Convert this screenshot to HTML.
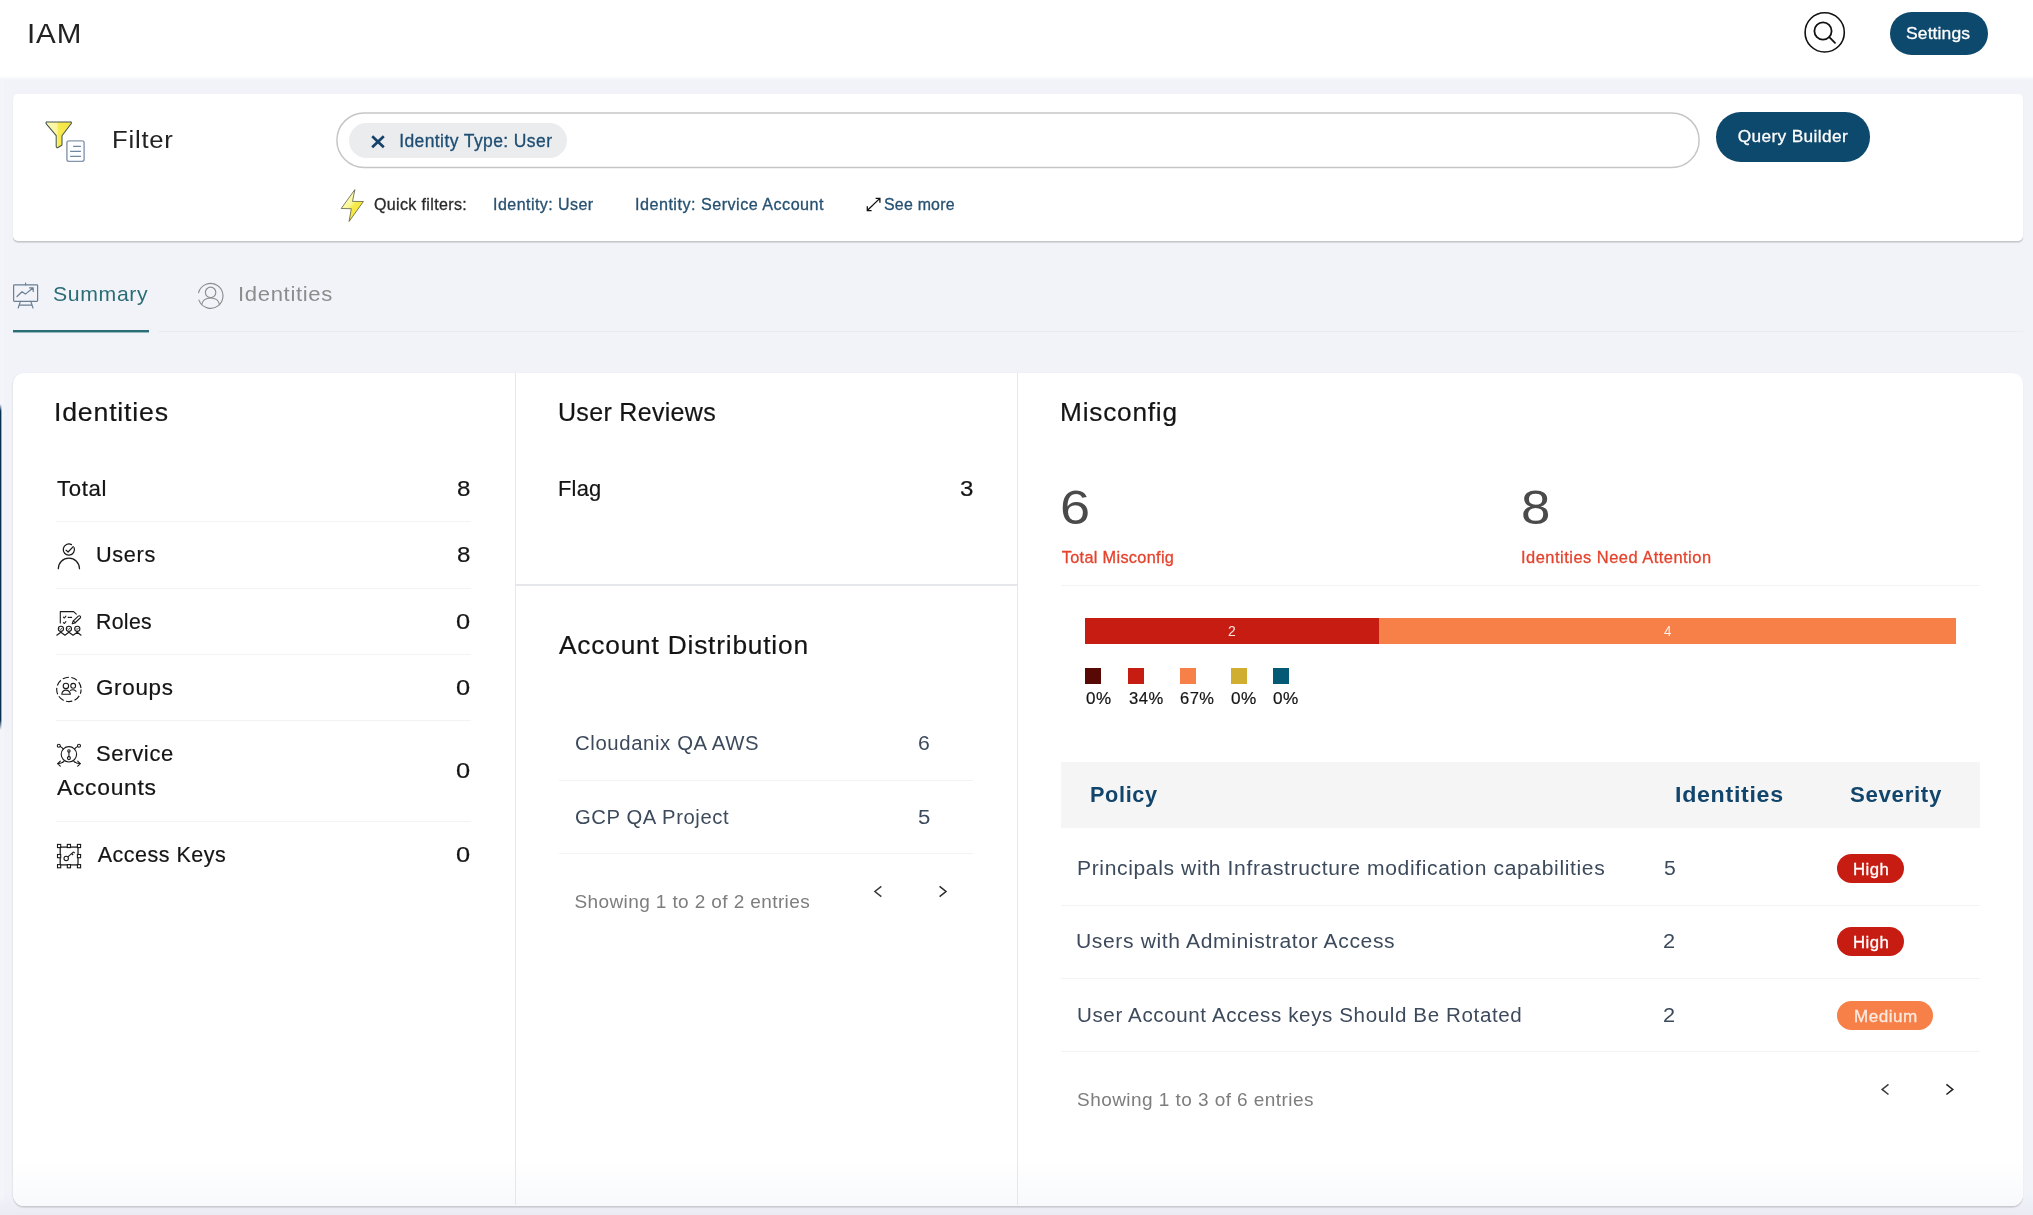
<!DOCTYPE html>
<html lang="en"><head><meta charset="utf-8"><title>IAM</title>
<style>
html,body{margin:0;padding:0;}
body{width:2033px;height:1215px;overflow:hidden;background:#f1f3f9;font-family:"Liberation Sans",sans-serif;}
#root{will-change:transform;position:relative;width:2033px;height:1215px;overflow:hidden;}
.t{position:absolute;transform-origin:0 0;white-space:nowrap;line-height:1;}
.a{position:absolute;}
.sep{height:1px;background:#f2f3f5;}
.b{-webkit-text-stroke:0.3px currentColor;}
.b2{-webkit-text-stroke:0.2px currentColor;}

</style></head>
<body>
<div id="root">
<header class="topbar">
<!-- header -->
<div class="a" style="left:0;top:0;width:2033px;height:80px;background:linear-gradient(to bottom,#fff 0,#fff 76px,#f1f3f9 80px);"></div>
<div class="a" style="left:0;top:80px;width:4px;height:1135px;background:#f4f5fa;"></div>
<div class="a" style="left:0;top:404px;width:1px;height:326px;background:linear-gradient(to bottom,rgba(5,48,78,0) 0,#05304e 7px,#05304e 316px,rgba(5,48,78,0) 100%);"></div><div class="a" style="left:1px;top:404px;width:1px;height:326px;background:linear-gradient(to bottom,rgba(5,48,78,0) 0,rgba(5,48,78,.38) 7px,rgba(5,48,78,.38) 316px,rgba(5,48,78,0) 100%);"></div>
<svg class="a" style="left:1800px;top:8px;" width="50" height="50" viewBox="0 0 50 50" fill="none" stroke="#111" stroke-width="1.6" stroke-linecap="round">
<circle cx="24.7" cy="24.4" r="19.6"/><circle cx="23" cy="23" r="8.6" stroke-width="1.8"/><path d="M29.3 29.2 35 34.8" stroke-width="1.8"/></svg>
<div class="a" style="left:1890px;top:12px;width:98px;height:43px;border-radius:21.5px;background:#0d486d;"></div>
<span class="t" style="left:27.10px;top:19px;font-size:28.2px;color:#222;letter-spacing:0.846px;transform:scaleX(1.0489);">IAM</span>
<span class="t b" style="left:1906.30px;top:25px;font-size:17.3px;color:#fff;letter-spacing:0.114px;transform:scaleX(1.0129);">Settings</span>
</header>
<section class="filter">
<!-- filter card -->
<div class="a" style="left:13px;top:94px;width:2010px;height:147px;background:#fff;border-radius:5px;box-shadow:0 1px 0 #c6c6ca,0 2px 1px rgba(120,120,130,.22);"></div>
<svg class="a" style="left:40px;top:115px;" width="52" height="52" viewBox="40 115 52 52">
<defs><linearGradient id="fg" x1="0" y1="0" x2="1" y2="0"><stop offset="0" stop-color="#fdf9b4"/><stop offset=".42" stop-color="#fbf59e"/><stop offset=".5" stop-color="#f7e94f"/><stop offset="1" stop-color="#f4e445"/></linearGradient></defs>
<path d="M47.1 121.9H70.3a1.1 1.1 0 0 1 .8 1.9L62 135.7v8.8c0 .4-.2.8-.6 1l-3.5 2a1.1 1.1 0 0 1-1.7-.9V135.7L46.3 123.8a1.1 1.1 0 0 1 .8-1.9z" fill="url(#fg)" stroke="#43544e" stroke-width="1.05" stroke-linejoin="round"/>
<rect x="66.9" y="140.9" width="17.2" height="20.5" rx="2.1" fill="#fdfeff" stroke="#8597ac" stroke-width="1.4"/>
<path d="M73.1 146.4H80.9M70.1 151.4H80.9M70.1 156.4H80.9" stroke="#6f879f" stroke-width="1.25" fill="none"/>
</svg>
<svg class="a" style="left:334px;top:110px;" width="1368" height="60"><rect x="2.9" y="2.9" width="1362.2" height="54.6" rx="27.3" fill="#fff" stroke="#c6c6c6" stroke-width="1.5"/></svg>
<div class="a" style="left:349px;top:123px;width:218px;height:35px;border-radius:17.5px;background:#ebecee;"></div>
<svg class="a" style="left:369px;top:133px;" width="18" height="18" viewBox="0 0 18 18"><path d="M3.2 3.2 14.8 14.2M14.8 3.2 3.2 14.2" stroke="#14426a" stroke-width="2.7" stroke-linecap="butt" fill="none"/></svg>
<div class="a" style="left:1716px;top:112px;width:154px;height:49.5px;border-radius:24.75px;background:#0d486d;"></div>
<!-- lightning -->
<svg class="a" style="left:336px;top:184px;" width="34" height="44" viewBox="336 184 34 44"><defs><linearGradient id="lg" x1="0.2" y1="0.1" x2="0.8" y2="0.8"><stop offset="0" stop-color="#fdfdd2"/><stop offset=".45" stop-color="#fbf793"/><stop offset=".6" stop-color="#f8ea48"/><stop offset="1" stop-color="#f5e438"/></linearGradient></defs><path d="M354.9 189.6 341.2 208.5 351.3 208.7 349.1 221.5 363.4 201.5 352.5 201.4z" fill="url(#lg)" stroke="#5a5e44" stroke-width=".8" stroke-linejoin="miter" stroke-miterlimit="6"/></svg>
<!-- expand icon -->
<svg class="a" style="left:864px;top:195px;" width="20" height="20" viewBox="0 0 20 20" fill="none" stroke="#111" stroke-width="1.3"><path d="M3.5 15.3 15.6 3.6M11.6 3.4h4.3v4.3M3.3 11.3v4.3h4.3"/></svg>
<span class="t" style="left:111.70px;top:128px;font-size:24.2px;color:#222;letter-spacing:0.726px;transform:scaleX(1.0618);">Filter</span>
<span class="t b" style="left:399.20px;top:133px;font-size:17.5px;color:#1d4d72;letter-spacing:0.400px;">Identity Type: User</span>
<span class="t b" style="left:1737.70px;top:128px;font-size:17.3px;color:#fff;letter-spacing:0.358px;">Query Builder</span>
<span class="t b" style="left:373.90px;top:197px;font-size:16px;color:#2a2a2a;letter-spacing:0.377px;">Quick filters:</span>
<span class="t b" style="left:493.10px;top:197px;font-size:16px;color:#265170;letter-spacing:0.446px;">Identity: User</span>
<span class="t b" style="left:634.50px;top:197px;font-size:16px;color:#265170;letter-spacing:0.480px;transform:scaleX(1.0097);">Identity: Service Account</span>
<span class="t b" style="left:884.20px;top:197px;font-size:16px;color:#265170;letter-spacing:0.229px;transform:scaleX(0.9943);">See more</span>
</section>
<nav class="tabs">
<!-- tabs -->
<div class="a" style="left:158px;top:330.5px;width:1865px;height:1px;background:#e9ebf1;"></div>
<div class="a" style="left:13px;top:330px;width:136px;height:2px;background:#2a6d74;"></div><div class="a" style="left:13px;top:332px;width:136px;height:1px;background:rgba(42,109,116,.45);"></div>
<svg class="a" style="left:11px;top:281px;" width="30" height="30" viewBox="0 0 30 30" fill="none" stroke="#6a7f93" stroke-width="1.2" stroke-linejoin="round" stroke-linecap="round">
<rect x="2.6" y="3.8" width="24" height="16.6" rx=".8"/><path d="M14.6 2.2v1.6M6 15.5l5-4.8 3.4 2.4 7.8-6.3M18.6 6.8h3.6v3.6M9.4 20.4 7.2 27M19.8 20.4 22 27M8.2 24.2h12.8"/></svg>
<svg class="a" style="left:195px;top:280px;" width="32" height="32" viewBox="195 280 32 32" fill="none" stroke="#8d8d8d" stroke-width="1.15" stroke-linecap="round">
<path d="M198.62 292.69A12.4 12.4 0 1 1 198.95 300.14"/><circle cx="210.6" cy="292.4" r="5.2"/><path d="M201.6 304.6c.9-4.2 4.2-6.6 9-6.6s8.1 2.4 9 6.6"/>
</svg>
<span class="t" style="left:53.30px;top:284px;font-size:20.8px;color:#2a6d74;letter-spacing:0.624px;transform:scaleX(1.0209);">Summary</span>
<span class="t" style="left:238.00px;top:284px;font-size:20.8px;color:#8c8c8c;letter-spacing:0.624px;transform:scaleX(1.0616);">Identities</span>
</nav>
<main class="summary">
<!-- main card -->
<div class="a" style="left:0;top:1195px;width:2033px;height:20px;background:linear-gradient(to bottom,rgba(233,235,242,0),rgba(233,235,242,.9));"></div>
<div class="a" style="left:13px;top:373px;width:2010px;height:832.5px;background:#fff;border-radius:11px;box-shadow:0 1px 0 #cacace,0 2px 1px rgba(120,120,130,.2),-1px 0 1px rgba(120,120,130,.08);"></div>
<div class="a" style="left:13px;top:1160px;width:2010px;height:45.5px;border-radius:0 0 11px 11px;background:linear-gradient(to bottom,rgba(248,248,251,0),rgba(247,248,251,.85));"></div>
<div class="a" style="left:514.5px;top:373px;width:1px;height:832px;background:#e6e7ea;"></div>
<div class="a" style="left:1016.5px;top:373px;width:1px;height:832px;background:#e6e7ea;"></div>
<div class="a" style="left:515px;top:584px;width:502px;height:1.5px;background:#e6e7ea;"></div>

<!-- identity separators -->
<div class="a sep" style="left:56px;top:521px;width:415px;"></div>
<div class="a sep" style="left:56px;top:588px;width:415px;"></div>
<div class="a sep" style="left:56px;top:654px;width:415px;"></div>
<div class="a sep" style="left:56px;top:720px;width:415px;"></div>
<div class="a sep" style="left:56px;top:821px;width:415px;"></div>
<!-- account distribution separators -->
<div class="a sep" style="left:559px;top:780px;width:414px;"></div>
<div class="a sep" style="left:559px;top:853px;width:414px;"></div>
<!-- misconfig -->
<div class="a sep" style="left:1061px;top:585px;width:919px;"></div>
<div class="a" style="left:1085px;top:618px;width:293.5px;height:26px;background:#c71c12;"></div>
<div class="a" style="left:1378.5px;top:618px;width:577.5px;height:26px;background:#f77f48;"></div>
<div class="a" style="left:1085px;top:668px;width:16px;height:16px;background:#580905;"></div>
<div class="a" style="left:1128px;top:668px;width:16px;height:16px;background:#c71c12;"></div>
<div class="a" style="left:1180px;top:668px;width:16px;height:16px;background:#f77f48;"></div>
<div class="a" style="left:1231px;top:668px;width:16px;height:16px;background:#cfae30;"></div>
<div class="a" style="left:1273px;top:668px;width:16px;height:16px;background:#045a74;"></div>
<div class="a" style="left:1061px;top:762px;width:919px;height:66px;background:#f5f5f5;"></div>
<div class="a sep" style="left:1061px;top:905px;width:919px;"></div>
<div class="a sep" style="left:1061px;top:978px;width:919px;"></div>
<div class="a sep" style="left:1061px;top:1051px;width:919px;"></div>
<div class="a" style="left:1837px;top:854px;width:67px;height:29px;border-radius:14.5px;background:#c71c12;"></div>
<div class="a" style="left:1837px;top:927px;width:67px;height:29px;border-radius:14.5px;background:#c71c12;"></div>
<div class="a" style="left:1837px;top:1001px;width:96px;height:29px;border-radius:14.5px;background:#f77f48;"></div>
<!-- pager arrows -->
<svg class="a" style="left:868px;top:881px;" width="20" height="20" viewBox="868 881 20 20" fill="none" stroke="#3a3a3a" stroke-width="1.5" stroke-linejoin="miter"><path d="M881.3 886.4L874.9 891.5L881.3 896.6"/></svg>
<svg class="a" style="left:932px;top:881px;" width="20" height="20" viewBox="932 881 20 20" fill="none" stroke="#2a2a2a" stroke-width="1.5" stroke-linejoin="miter"><path d="M939.6 886.4L946.0 891.5L939.6 896.6"/></svg>
<svg class="a" style="left:1875px;top:1079px;" width="20" height="20" viewBox="1875 1079 20 20" fill="none" stroke="#3a3a3a" stroke-width="1.5" stroke-linejoin="miter"><path d="M1888.5 1084.3L1882.1 1089.4L1888.5 1094.5"/></svg>
<svg class="a" style="left:1939px;top:1079px;" width="20" height="20" viewBox="1939 1079 20 20" fill="none" stroke="#222" stroke-width="1.5" stroke-linejoin="miter"><path d="M1946.4 1084.3L1952.8 1089.4L1946.4 1094.5"/></svg>
<!-- identity icons (page coordinates) -->
<svg class="a" style="left:50px;top:540px;" width="40" height="340" viewBox="50 540 40 340" fill="none" stroke="#1a1a1a" stroke-width="1.25" stroke-linecap="round" stroke-linejoin="round">
<!-- users -->
<path d="M74.11 547.63A5.6 5.6 0 1 1 71.48 544.61"/>
<path d="M66 550.1l2.1 1.9 5.1-5.4"/>
<path d="M58.3 568.7a10.6 10.6 0 0 1 21.2 0"/>
<!-- roles -->
<g stroke-width="1.1">
<path d="M60.3 623V611.6H73.6l2.7 2.6"/>
<path d="M63.4 617.1l1 .9 1.5-1.8M63.4 622.6l1 .9 1.5-1.8M68.2 617.4h1.2M70.4 617.4h1.2"/>
<path d="M72.2 623.8l.9-2.7 5.2-5a1.3 1.3 0 0 1 1.9 1.9l-5.3 5z"/>
<path d="M73.3 620.9l1.8 1.8"/>
<circle cx="60.9" cy="628.8" r="2.6"/><circle cx="68.9" cy="628.8" r="2.6"/><circle cx="77.3" cy="628.8" r="2.6"/>
<path d="M59.9 628.7l.8.8 1.3-1.4M67.9 628.7l.8.8 1.3-1.4M76.3 628.7l.8.8 1.3-1.4" stroke-width=".8"/>
<path d="M56.8 635.2l4.1-3 4 3 4-3 4.2 3 4.2-3 3.7 3"/>
</g>
<!-- groups -->
<circle cx="68.9" cy="689.4" r="12.2" stroke-width="1.15" stroke-dasharray="6.4 2.4" stroke-dashoffset="2" stroke-linecap="butt"/>
<g stroke-width="1.1">
<circle cx="65.9" cy="685.9" r="2.7"/>
<circle cx="73.2" cy="685.8" r="2.4"/>
<path d="M61.8 694.2c.4-3 2-4.1 4.1-4.1s3.9 1.1 4.5 4.1z"/>
<path d="M70.4 690.4c1.2-.9 4.2-1.2 5.6.9"/>
</g>
<!-- service accounts -->
<g stroke-width="1.1">
<circle cx="68.9" cy="754.3" r="7.7"/>
<circle cx="68.9" cy="750.9" r="1.2"/><circle cx="68.9" cy="758.1" r="1.5"/><path d="M68.9 752.1v4.5"/>
<circle cx="58.8" cy="745.7" r="1.5"/><circle cx="79" cy="745.7" r="1.5"/>
<path d="M60.2 746.5c1.5.5 2.5 1.6 3.1 2.8M77.6 746.5c-1.5.5-2.5 1.6-3.1 2.8"/>
<path d="M63.9 761.5c-1.5 1.4-3.5 2.1-6.2 2.2M60.3 761.2l-2.7 2.5 2.7 2.5M73.9 761.5c1.5 1.4 3.5 2.1 6.2 2.2M77.7 761.2l2.7 2.5-2.7 2.5"/>
</g>
<!-- access keys -->
<g stroke-width="1.25" stroke-linejoin="miter">
<rect x="60.2" y="847.1" width="17.8" height="17.8"/>
<g fill="#fff" stroke-width="1.1">
<rect x="57.5" y="844.4" width="3.2" height="3.2"/><rect x="67.3" y="844.4" width="3.2" height="3.2"/><rect x="77.4" y="844.4" width="3.2" height="3.2"/>
<rect x="57.5" y="854.5" width="3.2" height="3.2"/><rect x="77.4" y="854.5" width="3.2" height="3.2"/>
<rect x="57.5" y="864.6" width="3.2" height="3.2"/><rect x="67.3" y="864.6" width="3.2" height="3.2"/><rect x="77.4" y="864.6" width="3.2" height="3.2"/>
</g>
<circle cx="66.2" cy="858.4" r="2.2" stroke-width="1.1"/>
<path d="M67.9 856.9l5.6-5M71.7 853.5l1.4 1.5M73.5 851.9l1.2 1.3" stroke-width="1.1" stroke-linecap="butt"/>
</g>
</svg>
<span class="t b2" style="left:54.40px;top:400px;font-size:25px;color:#141414;letter-spacing:0.750px;transform:scaleX(1.0673);">Identities</span>
<span class="t b2" style="left:56.90px;top:479px;font-size:21.5px;color:#141414;letter-spacing:0.645px;transform:scaleX(1.0319);">Total</span>
<span class="t b2" style="left:95.90px;top:545px;font-size:21.5px;color:#141414;letter-spacing:0.645px;transform:scaleX(1.0088);">Users</span>
<span class="t b2" style="left:95.70px;top:612px;font-size:21.5px;color:#141414;letter-spacing:0.350px;transform:scaleX(0.9889);">Roles</span>
<span class="t b2" style="left:96.40px;top:678px;font-size:21.5px;color:#141414;letter-spacing:0.645px;transform:scaleX(1.0431);">Groups</span>
<span class="t b2" style="left:96.00px;top:744px;font-size:21.5px;color:#141414;letter-spacing:0.645px;transform:scaleX(1.0230);">Service</span>
<span class="t b2" style="left:57.30px;top:778px;font-size:21.5px;color:#141414;letter-spacing:0.645px;transform:scaleX(1.0652);">Accounts</span>
<span class="t b2" style="left:97.70px;top:845px;font-size:21.5px;color:#141414;letter-spacing:0.500px;">Access Keys</span>
<span class="t b2" style="left:457.10px;top:479px;font-size:21.5px;color:#141414;transform:scaleX(1.1200);">8</span>
<span class="t b2" style="left:457.10px;top:545px;font-size:21.5px;color:#141414;transform:scaleX(1.1200);">8</span>
<span class="t b2" style="left:455.80px;top:612px;font-size:21.5px;color:#141414;transform:scaleX(1.1818);">0</span>
<span class="t b2" style="left:455.80px;top:678px;font-size:21.5px;color:#141414;transform:scaleX(1.1818);">0</span>
<span class="t b2" style="left:455.80px;top:761px;font-size:21.5px;color:#141414;transform:scaleX(1.1818);">0</span>
<span class="t b2" style="left:455.80px;top:845px;font-size:21.5px;color:#141414;transform:scaleX(1.1818);">0</span>
<span class="t b2" style="left:558.00px;top:400px;font-size:25px;color:#141414;letter-spacing:0.318px;">User Reviews</span>
<span class="t b2" style="left:557.70px;top:479px;font-size:21.5px;color:#141414;letter-spacing:0.233px;transform:scaleX(1.0179);">Flag</span>
<span class="t b2" style="left:959.50px;top:479px;font-size:21.5px;color:#141414;transform:scaleX(1.1200);">3</span>
<span class="t b2" style="left:559.40px;top:633px;font-size:25px;color:#141414;letter-spacing:0.750px;transform:scaleX(1.0528);">Account Distribution</span>
<span class="t" style="left:574.70px;top:733px;font-size:20px;color:#3c4a5c;letter-spacing:0.600px;transform:scaleX(1.0162);">Cloudanix QA AWS</span>
<span class="t" style="left:917.50px;top:733px;font-size:20px;color:#3c4a5c;transform:scaleX(1.0600);">6</span>
<span class="t" style="left:574.50px;top:807px;font-size:20px;color:#3c4a5c;letter-spacing:0.600px;transform:scaleX(1.0113);">GCP QA Project</span>
<span class="t" style="left:918.10px;top:807px;font-size:20px;color:#3c4a5c;transform:scaleX(1.1111);">5</span>
<span class="t" style="left:574.50px;top:892px;font-size:19px;color:#7d7d7d;letter-spacing:0.392px;">Showing 1 to 2 of 2 entries</span>
<span class="t b2" style="left:1059.90px;top:400px;font-size:25px;color:#141414;letter-spacing:0.750px;transform:scaleX(1.0491);">Misconfig</span>
<span class="t" style="left:1060.10px;top:483px;font-size:49px;color:#4a4a4a;transform:scaleX(1.1043);">6</span>
<span class="t" style="left:1520.50px;top:483px;font-size:49px;color:#4a4a4a;transform:scaleX(1.0783);">8</span>
<span class="t b" style="left:1061.80px;top:549px;font-size:16.3px;color:#e4432d;letter-spacing:0.314px;">Total Misconfig</span>
<span class="t b" style="left:1520.70px;top:549px;font-size:16.3px;color:#e4432d;letter-spacing:0.489px;transform:scaleX(1.0096);">Identities Need Attention</span>
<span class="t" style="left:1228.40px;top:624px;font-size:14.2px;color:#fbe3e0;transform:scaleX(0.9857);">2</span>
<span class="t" style="left:1663.50px;top:624px;font-size:14.2px;color:#fdeee6;transform:scaleX(0.9500);">4</span>
<span class="t b2" style="left:1086.30px;top:690px;font-size:16.5px;color:#141414;letter-spacing:0.495px;transform:scaleX(1.0333);">0%</span>
<span class="t b2" style="left:1128.60px;top:690px;font-size:16.5px;color:#141414;letter-spacing:0.495px;transform:scaleX(1.0059);">34%</span>
<span class="t b2" style="left:1180.00px;top:690px;font-size:16.5px;color:#141414;letter-spacing:0.450px;">67%</span>
<span class="t b2" style="left:1231.30px;top:690px;font-size:16.5px;color:#141414;letter-spacing:0.495px;transform:scaleX(1.0417);">0%</span>
<span class="t b2" style="left:1273.40px;top:690px;font-size:16.5px;color:#141414;letter-spacing:0.495px;transform:scaleX(1.0417);">0%</span>
<span class="t" style="left:1089.50px;top:784px;font-size:21.2px;color:#12456b;font-weight:700;letter-spacing:0.636px;transform:scaleX(1.0234);">Policy</span>
<span class="t" style="left:1674.90px;top:784px;font-size:21.2px;color:#12456b;font-weight:700;letter-spacing:0.636px;transform:scaleX(1.0948);">Identities</span>
<span class="t" style="left:1849.90px;top:784px;font-size:21.2px;color:#12456b;font-weight:700;letter-spacing:0.636px;transform:scaleX(1.0500);">Severity</span>
<span class="t" style="left:1076.80px;top:858px;font-size:20px;color:#3c4a5c;letter-spacing:0.600px;transform:scaleX(1.0533);">Principals with Infrastructure modification capabilities</span>
<span class="t" style="left:1076.20px;top:931px;font-size:20px;color:#3c4a5c;letter-spacing:0.600px;transform:scaleX(1.0533);">Users with Administrator Access</span>
<span class="t" style="left:1077.30px;top:1005px;font-size:20px;color:#3c4a5c;letter-spacing:0.600px;transform:scaleX(1.0281);">User Account Access keys Should Be Rotated</span>
<span class="t" style="left:1663.50px;top:858px;font-size:20px;color:#3c4a5c;transform:scaleX(1.0600);">5</span>
<span class="t" style="left:1662.70px;top:931px;font-size:20px;color:#3c4a5c;transform:scaleX(1.0889);">2</span>
<span class="t" style="left:1662.70px;top:1005px;font-size:20px;color:#3c4a5c;transform:scaleX(1.0889);">2</span>
<span class="t b" style="left:1853.10px;top:862px;font-size:15.8px;color:#fff;letter-spacing:0.474px;transform:scaleX(1.0562);">High</span>
<span class="t b" style="left:1853.10px;top:935px;font-size:15.8px;color:#fff;letter-spacing:0.474px;transform:scaleX(1.0562);">High</span>
<span class="t b" style="left:1854.10px;top:1009px;font-size:15.8px;color:#fdeadf;letter-spacing:0.474px;transform:scaleX(1.0807);">Medium</span>
<span class="t" style="left:1077.10px;top:1090px;font-size:19px;color:#7d7d7d;letter-spacing:0.438px;">Showing 1 to 3 of 6 entries</span>
</main>
</div>
</body></html>
